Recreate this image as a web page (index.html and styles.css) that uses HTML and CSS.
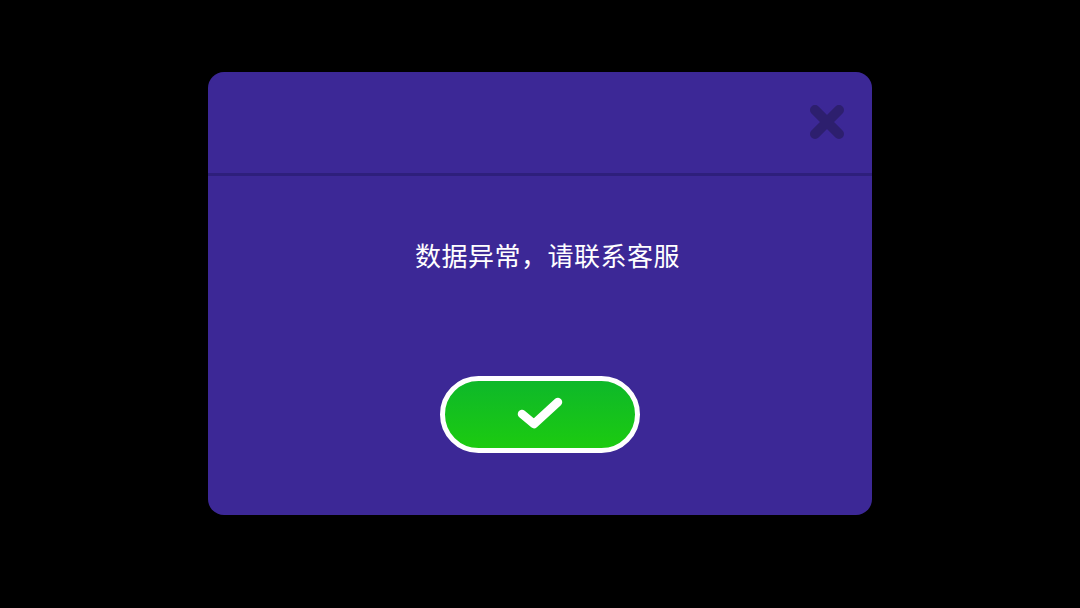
FILE: index.html
```html
<!DOCTYPE html>
<html lang="zh">
<head>
<meta charset="utf-8">
<link rel="stylesheet" href="styles.css">
</head>
<body>
<div class="stage">
  <div class="dialog">
    <div class="header">
      <button class="close" aria-label="关闭">
        <svg width="38" height="38" viewBox="0 0 38 38"><path d="M7 7 L31 31 M31 7 L7 31" stroke="#2d1f6e" stroke-width="10" stroke-linecap="round"/></svg>
      </button>
    </div>
    <div class="body">
      <p class="message">数据异常，请联系客服</p>
      <button class="ok" aria-label="确定">
        <svg width="52" height="40" viewBox="0 0 52 40"><path d="M8 21 L20 31 L44 9" fill="none" stroke="#fff" stroke-width="8.5" stroke-linecap="round" stroke-linejoin="round"/></svg>
      </button>
    </div>
  </div>
</div>
</body>
</html>
```
FILE: styles.css
```css
html, body { margin: 0; padding: 0; background: #000; }
body { font-family: "Noto Sans CJK SC", "Noto Sans", sans-serif; }
.stage {
  width: 1080px; height: 608px;
  display: flex; align-items: flex-start; justify-content: center;
  padding-top: 72px; box-sizing: border-box;
}
.dialog {
  width: 664px; height: 443px;
  background: #3c2896;
  border-radius: 16px;
  display: flex; flex-direction: column;
  overflow: hidden;
}
.header {
  border-bottom: 3px solid #2e1f7c;
  display: flex; justify-content: flex-end; align-items: flex-start;
  padding: 31px 26px 0 0;
  height: 70px;
}
.close { background: none; border: 0; padding: 0; width: 38px; height: 38px; cursor: pointer; }
.close svg { display: block; }
.body {
  flex: 1;
  display: flex; flex-direction: column; align-items: center;
}
.message {
  margin: 59px 0 0; padding-left: 15px;
  color: #fff; font-size: 26px; line-height: 40px; letter-spacing: 0.5px;
}
.ok {
  margin-top: 101px;
  width: 200px; height: 77px;
  border: 5px solid #fff; border-radius: 40px;
  background: linear-gradient(#0eb82a, #1ccb10);
  display: flex; align-items: center; justify-content: center;
  padding: 0; box-sizing: border-box; cursor: pointer;
}
.ok svg { display: block; margin-bottom: 4px; }
```
